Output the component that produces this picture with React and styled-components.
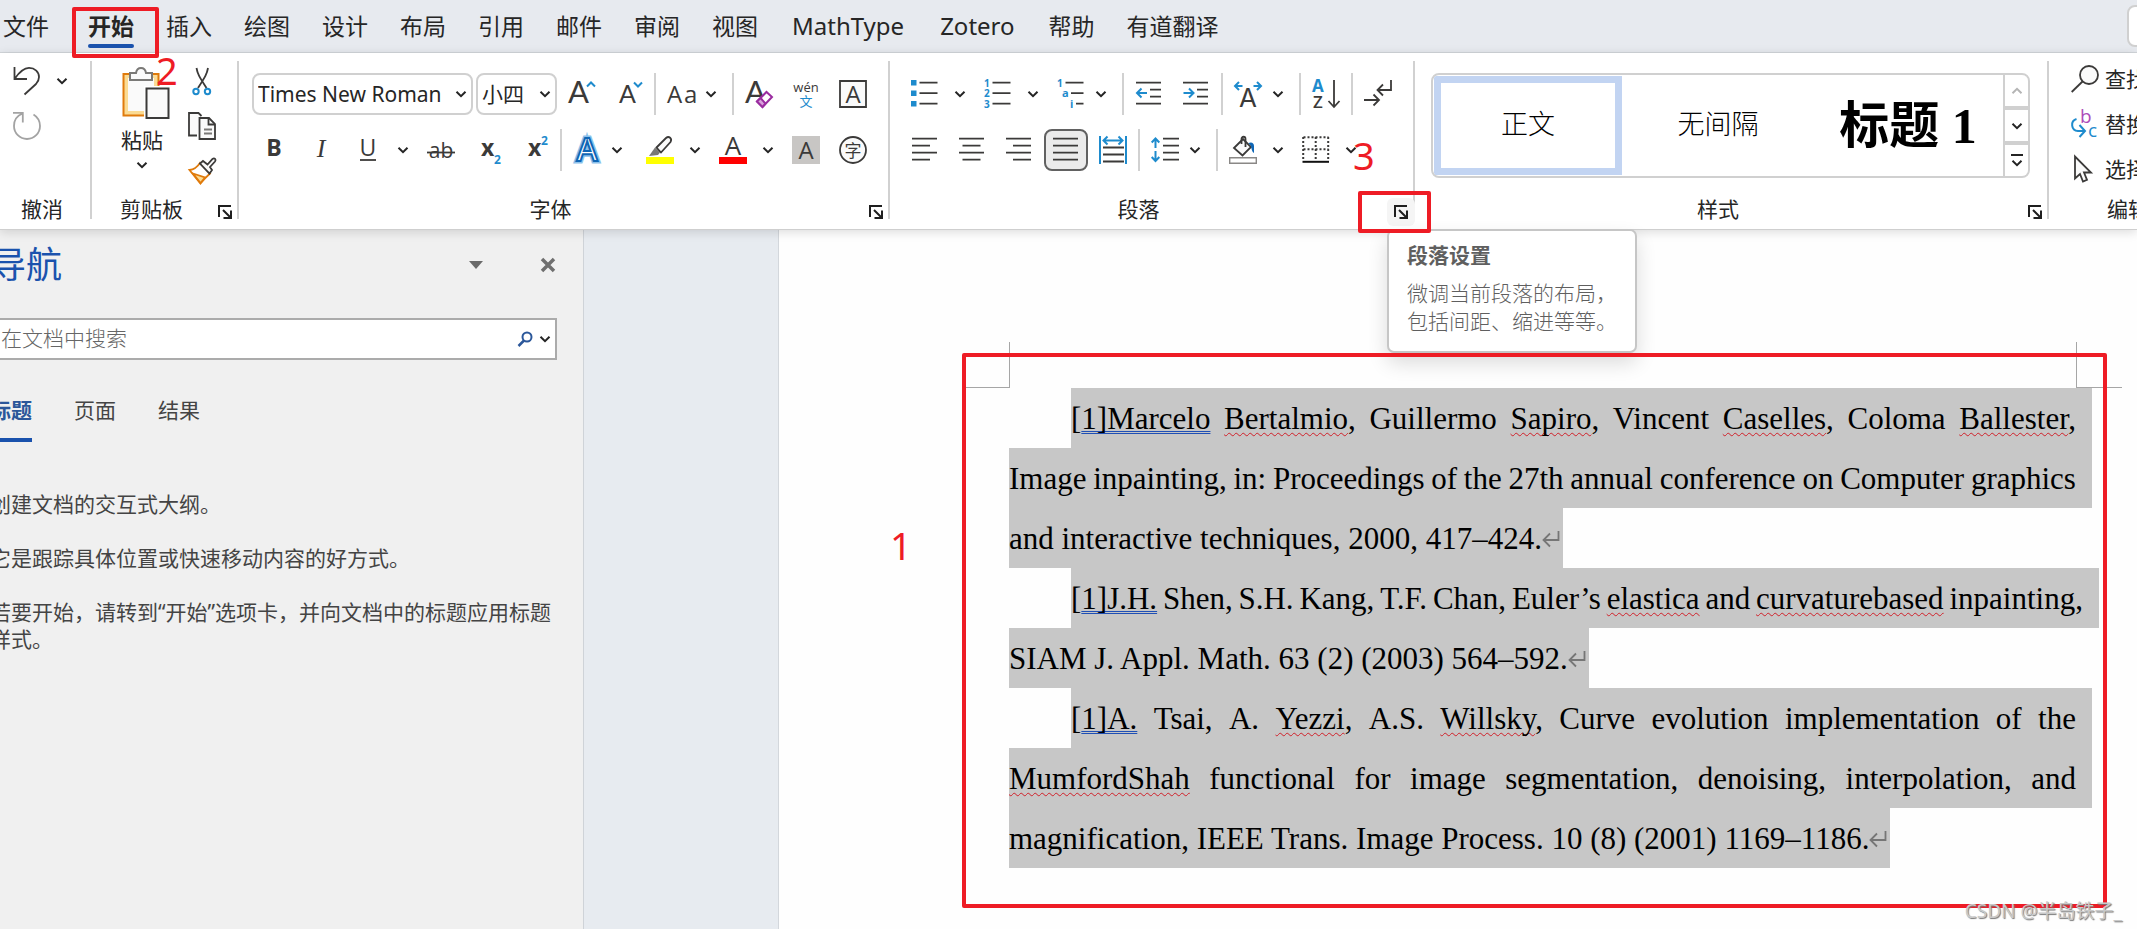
import React from "react";
import styled, { createGlobalStyle } from "styled-components";

const INK = "#3b3a39";
const BLUE = "#1e8bcd";
const ACCENT = "#1a52ad";
const RED = "#ee1c25";

const TABS = [
  "文件",
  "开始",
  "插入",
  "绘图",
  "设计",
  "布局",
  "引用",
  "邮件",
  "审阅",
  "视图",
  "MathType",
  "Zotero",
  "帮助",
  "有道翻译",
];

/* Icons */

function Icon({ children, size = 28 }) {
  return (
    <svg
      width={size}
      height={size}
      viewBox={`0 0 ${size} ${size}`}
      fill="none"
      stroke={INK}
      strokeWidth="1.8"
      aria-hidden="true"
    >
      {children}
    </svg>
  );
}

function Glyph({ x, y, size, color = INK, weight = 400, anchor, family, children, ...rest }) {
  return (
    <text
      x={x}
      y={y}
      fontSize={size}
      fontWeight={weight}
      textAnchor={anchor}
      fontFamily={family || '"Open Sans", "Noto Sans CJK SC", sans-serif'}
      fill={color}
      stroke="none"
      {...rest}
    >
      {children}
    </text>
  );
}

function Chevron({ color = "#242424", up }) {
  return (
    <svg width="12" height="8" viewBox="0 0 12 8" fill="none" stroke={color} strokeWidth="2" aria-hidden="true">
      <path d={up ? "M1.5 6.2 6 1.8l4.5 4.4" : "M1.5 1.8 6 6.2l4.5-4.4"} />
    </svg>
  );
}

const UndoIcon = () => (
  <Icon>
    <path d="M1.500 0v12h12.500M1.500 12C7 4 11 .9 16 .9c6 0 10 4 10 9.100 0 3-1.200 5-3 7L11.500 27.500" />
  </Icon>
);

const RedoIcon = () => (
  <Icon>
    <path stroke="#a3a3a3" d="M0 .9h9.800v9.600M9.500 1.500C4.500 3.500 1 8 1 14a13 13 0 0 0 26 0c0-5-2.500-9-6.500-11.500" />
  </Icon>
);

const PasteIcon = () => (
  <svg width="48" height="52" viewBox="0 0 48 52" fill="none" aria-hidden="true">
    <path d="M1.500 7h35v41.500h-35z" fill="#fbdb93" stroke="#e07b0c" strokeWidth="2" />
    <path d="M6 11h26v33H6z" fill="#fafafa" />
    <path d="M8 13V6h6c.5-3 2.500-5 5-5s4.500 2 5 5h6v7z" fill="#fafafa" stroke="#7a7977" strokeWidth="2" />
    <path d="M22 19h26v33H22z" fill="#fff" />
    <path d="M24.500 21.500h22V51h-22z" fill="#fafafa" stroke="#3b3a39" strokeWidth="2" />
  </svg>
);

const CutIcon = () => (
  <Icon>
    <path d="M8.500 1c1 6 3 9 10 20M20 1c-1 6-3 9-10 20" />
    <circle cx="8" cy="24.500" r="2.700" stroke={BLUE} strokeWidth="2" />
    <circle cx="19.500" cy="24.500" r="2.700" stroke={BLUE} strokeWidth="2" />
  </Icon>
);

const CopyIcon = () => (
  <Icon>
    <path d="M9 23.500H1V1h9.500l3 3" fill="#fafafa" />
    <path d="M11.500 6h9.500l6 6v15H11.500z" fill="#fafafa" />
    <path d="M20.500 6v6.500H27" />
    <path d="M16 17.500h8M16 21.500h8" stroke="#7a7977" />
  </Icon>
);

const PainterIcon = () => (
  <Icon>
    <path d="M1.500 13C6 12.500 10 9 12 6l10 10.500c-4 3.500-7 7-9.500 10z" fill="#fff" stroke="#e07b0c" />
    <path d="M5 16.500l12 4-4.500 5.500z" fill="#fbdb93" stroke="#e07b0c" />
    <path d="M12 6.500l3-2.500 4.500 3.500L24.500 2c2-1.500 4 .5 2.500 2.500l-5 5.500 2 3-2.500 3.500z" fill="#fafafa" />
  </Icon>
);

const GrowIcon = () => (
  <Icon>
    <Glyph x="0" y="23" size="31" family="Lato, sans-serif">A</Glyph>
    <path d="M19 6.500l4-4 4 4" stroke={BLUE} strokeWidth="2" />
  </Icon>
);

const ShrinkIcon = () => (
  <Icon>
    <Glyph x="4" y="23" size="25" family="Lato, sans-serif">A</Glyph>
    <path d="M19 2.500l4 4 4-4" stroke={BLUE} strokeWidth="2" />
  </Icon>
);

const CaseIcon = () => (
  <Icon>
    <Glyph x="0" y="23" size="24">A</Glyph>
    <Glyph x="17" y="23" size="24">a</Glyph>
  </Icon>
);

const ClearIcon = () => (
  <Icon>
    <Glyph x="0" y="23" size="31" family="Lato, sans-serif">A</Glyph>
    <path d="M12 21.500L21.500 12l5.500 5L17.500 27z" fill="#fff" stroke="#9a2ca0" strokeWidth="2" />
    <path d="M12 21.500l3.500-3.500 5 5.500-3 3.500z" fill="#d9a0dc" stroke="#9a2ca0" strokeWidth="2" />
  </Icon>
);

const PhoneticIcon = () => (
  <Icon>
    <Glyph x="14" y="12" size="13" anchor="middle">wén</Glyph>
    <Glyph x="14" y="26" size="13" anchor="middle" color={BLUE}>文</Glyph>
  </Icon>
);

const CharBorderIcon = () => (
  <Icon>
    <path d="M1 1h26v26H1z" fill="#fafafa" />
    <Glyph x="14" y="22.500" size="24" anchor="middle">A</Glyph>
  </Icon>
);

const BoldIcon = () => (
  <Icon>
    <Glyph x="14" y="20" size="23" weight="700" anchor="middle">B</Glyph>
  </Icon>
);

const ItalicIcon = () => (
  <Icon>
    <Glyph x="14" y="20.500" size="26" anchor="middle" family='"Liberation Serif", serif' fontStyle="italic">I</Glyph>
  </Icon>
);

const UnderlineIcon = () => (
  <Icon>
    <Glyph x="14" y="20" size="23" anchor="middle">U</Glyph>
    <path d="M6 24h16" />
  </Icon>
);

const StrikeIcon = () => (
  <Icon>
    <Glyph x="14" y="22" size="21" anchor="middle">ab</Glyph>
    <path d="M0 16.500h28" />
  </Icon>
);

const SubIcon = () => (
  <Icon>
    <Glyph x="7" y="20" size="23" weight="700">x</Glyph>
    <Glyph x="20" y="27.500" size="12" weight="700" color={BLUE}>2</Glyph>
  </Icon>
);

const SuperIcon = () => (
  <Icon>
    <Glyph x="7" y="20" size="23" weight="700">x</Glyph>
    <Glyph x="20" y="9" size="12" weight="700" color={BLUE}>2</Glyph>
  </Icon>
);

const EffectsIcon = () => (
  <Icon>
    <Glyph x="14" y="25" size="32" weight="600" anchor="middle" color="#fff" style={{ stroke: "#8cc1ea", strokeWidth: 5 }}>A</Glyph>
    <Glyph x="14" y="25" size="32" weight="600" anchor="middle" color="#fff" style={{ stroke: "#0f66b5", strokeWidth: 2 }}>A</Glyph>
  </Icon>
);

const HighlightIcon = () => (
  <Icon>
    <path d="M3 20l6-8.500 5 5L12 19z" fill="#7a7977" stroke="none" />
    <path d="M10.500 11.500L20 2c3-2.500 6.500.5 4.500 4L15 16.500z" fill="#fafafa" />
    <path d="M0 21h28v7H0z" fill="#ff0" stroke="none" />
  </Icon>
);

const FontColorIcon = () => (
  <Icon>
    <Glyph x="14" y="19" size="26" anchor="middle">A</Glyph>
    <path d="M0 21h28v7H0z" fill="#f00" stroke="none" />
  </Icon>
);

const CharShadeIcon = () => (
  <Icon>
    <path d="M0 0h28v28H0z" fill="#c8c6c4" stroke="none" />
    <Glyph x="14" y="22.500" size="24" anchor="middle">A</Glyph>
  </Icon>
);

const EncloseIcon = () => (
  <Icon>
    <circle cx="14" cy="14" r="13" fill="#fafafa" />
    <Glyph x="14" y="20.500" size="17" anchor="middle">字</Glyph>
  </Icon>
);

const BulletsIcon = () => (
  <Icon>
    <path d="M0 0h5.500v5.500H0zM0 10.500h5.500V16H0zM0 21h5.500v5.500H0z" fill={BLUE} stroke="none" />
    <path d="M8.500 2.700h18M8.500 13.200h18M8.500 23.700h18" />
  </Icon>
);

const NumberingIcon = () => (
  <Icon>
    <Glyph x="0" y="6.500" size="10" weight="700" color={BLUE}>1</Glyph>
    <Glyph x="0" y="17" size="10" weight="700" color={BLUE}>2</Glyph>
    <Glyph x="0" y="27.500" size="10" weight="700" color={BLUE}>3</Glyph>
    <path d="M8.500 2.700h18M8.500 13.200h18M8.500 23.700h18" />
  </Icon>
);

const MultilevelIcon = () => (
  <Icon>
    <Glyph x="0" y="6.500" size="10" weight="700" color={BLUE}>1</Glyph>
    <Glyph x="5" y="17" size="11" weight="700" color={BLUE}>a</Glyph>
    <Glyph x="13" y="27.500" size="11" weight="700" color={BLUE}>i</Glyph>
    <path d="M8.500 2.700h18M14 13.200h12.500M19 23.700h7.500" />
  </Icon>
);

function IndentIcon({ out }) {
  return (
    <Icon>
      <path d="M1 2.700h25M15 9.700h11M15 16.700h11M1 23.700h25" />
      <path
        d={out ? "M12 13H2.500M6.500 8.500L2 13l4.500 4.500" : "M1.500 13H11M7 8.500l4.500 4.500L7 17.500"}
        stroke={BLUE}
        strokeWidth="2"
      />
    </Icon>
  );
}

const AlignIcon = ({ d }) => (
  <Icon>
    <path d={d} />
  </Icon>
);

const DistributeIcon = () => (
  <Icon>
    <path d="M4 11.500h21M4 18.500h21M4 25.500h21" />
    <path d="M1 0v28M27 0v28M5 4.500h18M8.500.5l-4 4 4 4M19.500.5l4 4-4 4" stroke={BLUE} strokeWidth="2" />
  </Icon>
);

const SpacingIcon = () => (
  <Icon>
    <path d="M12 2.700h16M12 9.700h16M12 16.700h16M12 23.700h16" />
    <path d="M4.500 2.500V12M.7 6.500l3.800-4 3.800 4M4.500 15v9.500M.7 21l3.800 4 3.800-4" stroke={BLUE} strokeWidth="2" />
  </Icon>
);

const AsianIcon = () => (
  <Icon>
    <Glyph x="14" y="27" size="26" anchor="middle" family="Inter, sans-serif">A</Glyph>
    <path d="M8.500 6H1.500M5 2L1 6l4 4M19.500 6h7M23 2l4 4-4 4" stroke={BLUE} strokeWidth="2" />
  </Icon>
);

const SortIcon = () => (
  <Icon>
    <Glyph x="0" y="12" size="17" weight="700" color={BLUE}>A</Glyph>
    <Glyph x="1" y="28" size="17" weight="600">Z</Glyph>
    <path d="M22 0v26.500M16.500 21l5.500 6 5.500-6" />
  </Icon>
);

const MarksIcon = () => (
  <Icon>
    <path d="M27 0v10H14M19 4.500L13.500 10l5.500 5.500M0 20h14.500M9.500 14.500L15 20l-5.500 5.500" />
  </Icon>
);

const ShadingIcon = () => (
  <Icon>
    <path d="M5 12l9-9 8 8-8.500 8.500z" fill="#fafafa" />
    <path d="M12.500 8V3c0-3 4-3 4 0v8" />
    <path d="M19.500 7c3-1.500 5.500 0 5.500 3v7c-2-1-2.500-4-3-7z" fill="#0f66b5" stroke="none" />
    <path d="M.7 21.700h26.600v5.600H.7z" fill="#fff" stroke="#8a8886" strokeWidth="1.400" />
  </Icon>
);

const BordersIcon = () => (
  <Icon>
    <path d="M1.500 1.200h25M1.500 13.200h25M1.200 1v23M13.700 1v23M26.200 1v23" strokeWidth="2" strokeDasharray="2 2" />
    <path d="M.5 25.800h26.500" stroke="#111" strokeWidth="2" />
  </Icon>
);

const FindIcon = () => (
  <Icon>
    <circle cx="18" cy="10" r="9" fill="#fafafa" />
    <path d="M11.500 16.500L.7 27" />
  </Icon>
);

const ReplaceIcon = () => (
  <Icon>
    <Glyph x="9" y="13" size="19" color="#ad4bb8">b</Glyph>
    <Glyph x="17" y="27" size="19" color={BLUE}>c</Glyph>
    <path d="M5.500 9C-1 11 0 20.500 7 21h6M8.500 15l5.500 6-5.500 6" stroke={BLUE} strokeWidth="2" />
  </Icon>
);

const SelectIcon = () => (
  <Icon>
    <path d="M4 1.500v22l5-4.500 3 7.500 4-1.700-3-7.300h7z" fill="#fafafa" />
  </Icon>
);

const LauncherIcon = () => (
  <svg width="16" height="16" viewBox="0 0 16 16" fill="none" stroke="#1f1f1f" strokeWidth="2" aria-hidden="true">
    <path d="M2 13V2h12M6 6l7.500 7.500M14 6.500V14H6.500" />
  </svg>
);

const ReturnMark = () => (
  <MarkSvg width="18" height="18" viewBox="0 0 18 18" fill="none" stroke="#767676" strokeWidth="1.800" aria-hidden="true">
    <path d="M16.500 1v9H2M8 3.500L1.500 10 8 16.500" />
  </MarkSvg>
);

/* Ribbon pieces */

function Tool({ icon, label, pressed }) {
  return (
    <ToolButton type="button" aria-label={label} aria-pressed={pressed ? true : undefined} $pressed={pressed}>
      {icon}
    </ToolButton>
  );
}

// icon with its own drop-down arrow
function SplitTool({ icon, label }) {
  return (
    <SplitWrap>
      <ToolButton type="button" aria-label={label}>
        {icon}
      </ToolButton>
      <ArrowButton type="button" aria-label={`${label}选项`}>
        <Chevron />
      </ArrowButton>
    </SplitWrap>
  );
}

function MenuTool({ icon, label }) {
  return (
    <MenuButton type="button" aria-label={label}>
      {icon}
      <Chevron />
    </MenuButton>
  );
}

function GroupFooter({ label, launcher, children }) {
  return (
    <Footer>
      <FooterLabel>{label}</FooterLabel>
      {launcher && (
        <LauncherWrap>
          <Launcher type="button" aria-label={launcher} $hover={Boolean(children)}>
            <LauncherIcon />
          </Launcher>
          {children}
        </LauncherWrap>
      )}
    </Footer>
  );
}

/* Document text: "_word_" is a spelling mark, "=word=" is a grammar mark */

function Word({ text }) {
  const parts = text.split(/(_[^_]+_|=[^=]+=)/).filter(Boolean);
  return (
    <span>
      {parts.map((part, i) => {
        if (part[0] === "_") return <Spelling key={i}>{part.slice(1, -1)}</Spelling>;
        if (part[0] === "=") return <Grammar key={i}>{part.slice(1, -1)}</Grammar>;
        return part;
      })}{" "}
    </span>
  );
}

const LINES = [
  { text: "[=1]Marcelo= _Bertalmio_, Guillermo _Sapiro_, Vincent _Caselles_, Coloma _Ballester_,", indent: true },
  { text: "Image inpainting, in: Proceedings of the 27th annual conference on Computer graphics" },
  { text: "and interactive techniques, 2000, 417–424.", last: true },
  { text: "[=1]J.H.= Shen, S.H. Kang, T.F. Chan, Euler’s _elastica_ and _curvaturebased_ inpainting,", indent: true, hang: true },
  { text: "SIAM J. Appl. Math. 63 (2) (2003) 564–592.", last: true },
  { text: "[=1]A.= Tsai, A. _Yezzi_, A.S. _Willsky_, Curve evolution implementation of the", indent: true },
  { text: "_MumfordShah_ functional for image segmentation, denoising, interpolation, and" },
  { text: "magnification, IEEE Trans. Image Process. 10 (8) (2001) 1169–1186.", last: true },
];

function Line({ line }) {
  if (line.last) {
    return (
      <LastLine>
        {line.text}
        <ReturnMark />
      </LastLine>
    );
  }
  return (
    <FullLine $indent={line.indent} $hang={line.hang}>
      {line.text.split(" ").map((word, i) => (
        <Word key={i} text={word} />
      ))}
    </FullLine>
  );
}

export default function App() {
  return (
    <Window>
      <GlobalStyle />
      <TabBar>
        {TABS.map((tab) => (
          <Tab key={tab} type="button" $active={tab === "开始"} $latin={/^[A-Z]/.test(tab)}>
            {tab}
            {tab === "开始" && (
              <>
                <TabFrame />
                <TabStep>2</TabStep>
              </>
            )}
          </Tab>
        ))}
        <CommentButton type="button" aria-label="批注" />
      </TabBar>

      <Ribbon>
        <Group $width={90} $end={6}>
          <Stack $left={5}>
            <StackRow>
              <Tool icon={<UndoIcon />} label="撤消" />
              <ArrowButton type="button" aria-label="撤消选项">
                <Chevron />
              </ArrowButton>
            </StackRow>
            <StackRow>
              <Tool icon={<RedoIcon />} label="重复" />
            </StackRow>
          </Stack>
          <GroupFooter label="撤消" />
        </Group>
        <Divider />

        <Group $width={145}>
          <Clipboard>
            <PasteButton type="button">
              <PasteIcon />
              粘贴
              <Chevron />
            </PasteButton>
            <Stack $left={5}>
              <StackRow>
                <Tool icon={<CutIcon />} label="剪切" />
              </StackRow>
              <StackRow>
                <Tool icon={<CopyIcon />} label="复制" />
              </StackRow>
              <StackRow>
                <Tool icon={<PainterIcon />} label="格式刷" />
              </StackRow>
            </Stack>
          </Clipboard>
          <GroupFooter label="剪贴板" launcher="剪贴板设置" />
        </Group>
        <Divider />

        <Group $width={649}>
          <Tools>
            <ToolRow>
              <Combo $width={221}>
                <select aria-label="字体" defaultValue="Times New Roman">
                  <option>Times New Roman</option>
                </select>
                <Chevron />
              </Combo>
              <Combo $width={81}>
                <select aria-label="字号" defaultValue="小四">
                  <option>小四</option>
                </select>
                <Chevron />
              </Combo>
              <Tool icon={<GrowIcon />} label="增大字号" />
              <Tool icon={<ShrinkIcon />} label="减小字号" />
              <Separator />
              <MenuTool icon={<CaseIcon />} label="更改大小写" />
              <Separator />
              <Tool icon={<ClearIcon />} label="清除格式" />
              <Tool icon={<PhoneticIcon />} label="拼音指南" />
              <Tool icon={<CharBorderIcon />} label="字符边框" />
            </ToolRow>
            <ToolRow>
              <Tool icon={<BoldIcon />} label="加粗" />
              <Tool icon={<ItalicIcon />} label="倾斜" />
              <SplitTool icon={<UnderlineIcon />} label="下划线" />
              <Tool icon={<StrikeIcon />} label="删除线" />
              <Tool icon={<SubIcon />} label="下标" />
              <Tool icon={<SuperIcon />} label="上标" />
              <Separator />
              <MenuTool icon={<EffectsIcon />} label="文本效果" />
              <SplitTool icon={<HighlightIcon />} label="突出显示" />
              <SplitTool icon={<FontColorIcon />} label="字体颜色" />
              <Tool icon={<CharShadeIcon />} label="字符底纹" />
              <Tool icon={<EncloseIcon />} label="带圈字符" />
            </ToolRow>
          </Tools>
          <GroupFooter label="字体" launcher="字体设置" />
        </Group>
        <Divider />

        <Group $width={523}>
          <Tools>
            <ToolRow>
              <SplitTool icon={<BulletsIcon />} label="项目符号" />
              <SplitTool icon={<NumberingIcon />} label="编号" />
              <MenuTool icon={<MultilevelIcon />} label="多级列表" />
              <Separator />
              <Tool icon={<IndentIcon out />} label="减少缩进" />
              <Tool icon={<IndentIcon />} label="增加缩进" />
              <Separator />
              <MenuTool icon={<AsianIcon />} label="中文版式" />
              <Separator />
              <Tool icon={<SortIcon />} label="排序" />
              <Separator />
              <Tool icon={<MarksIcon />} label="显示编辑标记" />
            </ToolRow>
            <ToolRow>
              <Tool icon={<AlignIcon d="M1 2.700h25M1 9.700h18M1 16.700h25M1 23.700h18" />} label="左对齐" />
              <Tool icon={<AlignIcon d="M1 2.700h25M4.500 9.700h18M1 16.700h25M4.500 23.700h18" />} label="居中" />
              <Tool icon={<AlignIcon d="M1 2.700h25M8 9.700h18M1 16.700h25M8 23.700h18" />} label="右对齐" />
              <Tool icon={<AlignIcon d="M1 2.700h25M1 9.700h25M1 16.700h25M1 23.700h25" />} label="两端对齐" pressed />
              <Tool icon={<DistributeIcon />} label="分散对齐" />
              <Separator />
              <MenuTool icon={<SpacingIcon />} label="行和段落间距" />
              <Separator />
              <SplitTool icon={<ShadingIcon />} label="底纹" />
              <SplitTool icon={<BordersIcon />} label="边框" />
            </ToolRow>
          </Tools>
          <GroupFooter label="段落" launcher="段落设置">
            <Tooltip role="tooltip">
              <strong>段落设置</strong>
              <p>
                微调当前段落的布局，
                <br />
                包括间距、缩进等等。
              </p>
            </Tooltip>
            <LauncherFrame />
            <LauncherStep>3</LauncherStep>
          </GroupFooter>
        </Group>
        <Divider />

        <Group $grow>
          <Gallery>
            <StyleCell type="button" $selected>
              正文
            </StyleCell>
            <StyleCell type="button">无间隔</StyleCell>
            <StyleCell type="button" $heading>
              标题 1
            </StyleCell>
            <GalleryScroll>
              <ScrollButton type="button" aria-label="上一行">
                <Chevron up color="#b5b5b5" />
              </ScrollButton>
              <ScrollButton type="button" aria-label="下一行">
                <Chevron />
              </ScrollButton>
              <ScrollButton type="button" aria-label="更多样式" $bar>
                <Chevron />
              </ScrollButton>
            </GalleryScroll>
          </Gallery>
          <GroupFooter label="样式" launcher="样式设置" />
        </Group>
        <Divider />

        <Group $width={88}>
          <EditStack>
            <EditButton type="button">
              <FindIcon />
              查找
            </EditButton>
            <EditButton type="button">
              <ReplaceIcon />
              替换
            </EditButton>
            <EditButton type="button">
              <SelectIcon />
              选择
            </EditButton>
          </EditStack>
          <EditLabel>编辑</EditLabel>
        </Group>
      </Ribbon>

      <Workspace>
        <NavPane>
          <NavHeader>
            <h2>导航</h2>
            <NavButton type="button" aria-label="任务窗格选项">
              <svg width="14" height="8" viewBox="0 0 14 8" aria-hidden="true">
                <path d="M0 0h14L7 8z" fill="#6a6a6a" />
              </svg>
            </NavButton>
            <NavButton type="button" aria-label="关闭">
              <svg width="16" height="16" viewBox="0 0 16 16" aria-hidden="true">
                <path d="M2 2l12 12M14 2L2 14" stroke="#6f6f6f" strokeWidth="3.500" />
              </svg>
            </NavButton>
          </NavHeader>
          <SearchBox>
            <input type="text" aria-label="在文档中搜索" placeholder="在文档中搜索" />
            <SearchButton type="button" aria-label="搜索">
              <svg width="16" height="16" viewBox="0 0 16 16" fill="none" stroke="#2b579a" aria-hidden="true">
                <circle cx="10" cy="6" r="4.500" strokeWidth="2" />
                <path d="M7 9.500L1.500 15" strokeWidth="2.500" />
              </svg>
            </SearchButton>
            <SearchButton type="button" aria-label="搜索选项">
              <Chevron />
            </SearchButton>
          </SearchBox>
          <NavTabs>
            <NavTab type="button" $active>
              标题
            </NavTab>
            <NavTab type="button">页面</NavTab>
            <NavTab type="button">结果</NavTab>
          </NavTabs>
          <NavText>
            <p>创建文档的交互式大纲。</p>
            <p>它是跟踪具体位置或快速移动内容的好方式。</p>
            <p>若要开始，请转到“开始”选项卡，并向文档中的标题应用标题样式。</p>
          </NavText>
        </NavPane>

        <Page>
          <Article>
            <CropMarks>
              <CropCorner $side="right" />
              <CropCorner $side="left" />
            </CropMarks>
            {LINES.map((line, i) => (
              <Line key={i} line={line} />
            ))}
            <ArticleFrame />
            <ArticleStep>1</ArticleStep>
          </Article>
        </Page>
      </Workspace>
      <Watermark>CSDN @半岛铁子_</Watermark>
    </Window>
  );
}

const GlobalStyle = createGlobalStyle`
  *, *::before, *::after {
    box-sizing: border-box;
  }

  body {
    margin: 0;
    overflow: hidden;
    font-family: "Noto Sans", "Noto Sans CJK SC", sans-serif;
    color: #262626;
  }

  button, input, select {
    font: inherit;
    color: inherit;
    margin: 0;
    padding: 0;
    border: 0;
    background: none;
  }

  svg {
    flex: none;
    overflow: visible;
  }

  h2, p {
    margin: 0;
  }
`;

const Window = styled.div`
  position: relative;
  display: flex;
  flex-direction: column;
  height: 100vh;
  overflow: hidden;
  background: #e7ebf0;
`;

const TabBar = styled.nav`
  display: flex;
  gap: 32px;
  flex: none;
  height: 53px;
  padding-left: 3px;
  background: #e7eaef;
  border-bottom: 1px solid #d2d6da;
`;

const Tab = styled.button`
  position: relative;
  z-index: 3;
  flex: none;
  height: 52px;
  padding: 0 ${(p) => (p.$latin ? 2 : 0)}px;
  font-size: ${(p) => (p.$latin ? 24 : 23)}px;
  line-height: 52px;
  white-space: nowrap;
  font-weight: ${(p) => (p.$active ? 700 : 400)};

  &:first-child {
    margin-right: 7px;
  }

  &::after {
    content: "";
    display: ${(p) => (p.$active ? "block" : "none")};
    position: absolute;
    left: 0;
    right: 0;
    bottom: 4px;
    height: 4px;
    border-radius: 2px;
    background: ${ACCENT};
  }
`;

const CommentButton = styled.button`
  flex: none;
  width: 42px;
  height: 42px;
  margin: 5px -32px 0 auto;
  background: #fff;
  border: 2px solid #d0d0d0;
  border-radius: 8px;
`;

/* Red marks drawn over the window */
const Frame = styled.span`
  position: absolute;
  z-index: 4;
  border: 4px solid ${RED};
  border-radius: 2px;
  pointer-events: none;
`;

const Step = styled.span`
  position: absolute;
  z-index: 4;
  font-size: 38px;
  font-weight: 400;
  line-height: 40px;
  color: ${RED};
`;

const TabFrame = styled(Frame)`
  top: 7px;
  left: -16px;
  width: 87px;
  height: 51px;
`;

const TabStep = styled(Step)`
  top: 50px;
  left: 68px;
`;

const LauncherFrame = styled(Frame)`
  top: -7px;
  left: -29px;
  width: 73px;
  height: 42px;
`;

const LauncherStep = styled(Step)`
  top: -63px;
  left: -34px;
`;

const Ribbon = styled.header`
  position: relative;
  z-index: 2;
  display: flex;
  flex: none;
  height: 177px;
  background: #fff;
  border-bottom: 1px solid #cfcfcf;
  box-shadow: 0 2px 10px rgba(0, 0, 0, 0.14);
  font-size: 21px;
`;

const Group = styled.section`
  display: flex;
  flex-direction: column;
  flex: ${(p) => (p.$grow ? "1 1 0" : "none")};
  width: ${(p) => (p.$width ? `${p.$width}px` : "auto")};
  min-width: 0;
  padding-right: ${(p) => p.$end || 0}px;
`;

const Divider = styled.div`
  flex: none;
  width: 2px;
  height: 158px;
  margin-top: 8px;
  background: #d1d1d1;
`;

const Footer = styled.div`
  display: flex;
  height: 28px;
  margin-top: auto;
  margin-bottom: 3px;
`;

const FooterLabel = styled.span`
  flex: 1;
  line-height: 23px;
  text-align: center;
`;

const LauncherWrap = styled.div`
  position: relative;
  margin-right: -2px;
`;

const Launcher = styled.button`
  display: flex;
  align-items: center;
  justify-content: center;
  position: relative;
  width: 28px;
  height: 28px;
  border-radius: 6px;
  background: ${(p) => (p.$hover ? "#f5f5f5" : "none")};
`;

const Tools = styled.div`
  display: flex;
  flex-direction: column;
  gap: 14px;
  padding: 20px 0 0 13px;
`;

const ToolRow = styled.div`
  display: flex;
  gap: 3px;
  height: 42px;
`;

const Separator = styled.span`
  flex: none;
  width: 2px;
  background: #d1d1d1;
`;

const ToolButton = styled.button`
  display: flex;
  align-items: center;
  justify-content: center;
  flex: none;
  width: 44px;
  height: 42px;
  border: 2px solid ${(p) => (p.$pressed ? "#616161" : "transparent")};
  border-radius: 8px;
  background: ${(p) => (p.$pressed ? "#ebebeb" : "none")};
`;

const ArrowButton = styled.button`
  display: flex;
  align-items: center;
  justify-content: center;
  flex: none;
  width: 26px;
`;

const SplitWrap = styled.div`
  display: flex;
`;

const MenuButton = styled.button`
  display: flex;
  align-items: center;
  gap: 10px;
  flex: none;
  width: 70px;
  padding-left: 8px;
`;

const Combo = styled.div`
  display: flex;
  align-items: center;
  flex: none;
  width: ${(p) => p.$width}px;
  border: 2px solid #d0d0d0;
  border-radius: 8px;
  padding-right: 4px;

  select {
    flex: 1;
    min-width: 0;
    height: 38px;
    padding-left: 4px;
    appearance: none;
    outline: none;
  }
`;

const Stack = styled.div`
  display: flex;
  flex-direction: column;
  padding: 5px 0 0 ${(p) => p.$left}px;
`;

const StackRow = styled.div`
  display: flex;
  align-items: center;
  height: 45px;
`;

const Clipboard = styled.div`
  display: flex;
  padding-left: 17px;
`;

const PasteButton = styled.button`
  display: flex;
  flex-direction: column;
  align-items: center;
  width: 66px;
  padding-top: 14px;
  line-height: 42px;

  svg:first-child {
    margin-left: 8px;
  }
`;

const EditStack = styled.div`
  display: flex;
  flex-direction: column;
  padding: 3px 0 0 22px;
`;

const EditButton = styled.button`
  display: flex;
  align-items: center;
  gap: 6px;
  height: 45px;
  line-height: 26px;
  white-space: nowrap;
`;

const EditLabel = styled.span`
  margin: auto 0 3px 58px;
  height: 28px;
  line-height: 23px;
  white-space: nowrap;
`;

const Gallery = styled.div`
  display: flex;
  height: 105px;
  margin: 20px 17px 0 16px;
  border: 2px solid #d0d0d0;
  border-radius: 8px;
  overflow: hidden;
`;

const StyleCell = styled.button`
  flex: 1;
  margin: 1px;
  border: 7px solid ${(p) => (p.$selected ? "#c2d4f2" : "transparent")};
  color: #000;
  font-family: "Liberation Serif", "Noto Sans CJK SC", serif;
  font-size: ${(p) => (p.$heading ? 50 : 27)}px;
  font-weight: ${(p) => (p.$heading ? 700 : 300)};
  line-height: 1;
  white-space: nowrap;
`;

const GalleryScroll = styled.div`
  display: flex;
  flex-direction: column;
  gap: 4px;
  flex: none;
  width: 25px;
  border-left: 2px solid #d0d0d0;
  background: #d0d0d0;
`;

const ScrollButton = styled.button`
  display: flex;
  flex-direction: column;
  align-items: center;
  justify-content: center;
  flex: 1;
  background: #fff;

  &::before {
    content: "";
    display: ${(p) => (p.$bar ? "block" : "none")};
    width: 12px;
    height: 2px;
    margin-bottom: 3px;
    background: #242424;
  }
`;

const Tooltip = styled.div`
  position: absolute;
  top: 31px;
  left: 0;
  width: 250px;
  padding: 10px 18px 16px;
  background: #fff;
  border: 2px solid #c6c6c6;
  border-radius: 7px;
  box-shadow: 0 10px 20px rgba(0, 0, 0, 0.14);
  color: #5f5f5f;
  line-height: 28px;
  white-space: nowrap;

  p {
    margin-top: 10px;
    font-weight: 300;
  }
`;

const Workspace = styled.main`
  display: flex;
  flex: 1;
  min-height: 0;
`;

const NavPane = styled.aside`
  flex: none;
  width: 594px;
  margin-left: -10px;
  padding-right: 26px;
  background: #f0f0f0;
  border-right: 1px solid #cfd3d8;
`;

const NavHeader = styled.div`
  display: flex;
  align-items: center;
  gap: 44px;
  margin-right: -5px;
  padding: 10px 0 28px;

  h2 {
    flex: 1;
    font-size: 36px;
    font-weight: 400;
    line-height: 50px;
    color: ${ACCENT};
  }
`;

const NavButton = styled.button`
  display: flex;
  align-items: center;
  justify-content: center;
  width: 28px;
  height: 28px;
`;

const SearchBox = styled.div`
  display: flex;
  align-items: center;
  height: 42px;
  padding: 0 0 0 9px;
  background: #fff;
  border: 2px solid #ababab;

  input {
    flex: 1;
    min-width: 0;
    height: 36px;
    margin-bottom: 2px;
    font-size: 21px;
    font-weight: 300;
    outline: none;
  }

  input::placeholder {
    color: #666;
    opacity: 1;
  }
`;

const SearchButton = styled.button`
  display: flex;
  align-items: center;
  justify-content: center;
  width: 20px;
  height: 38px;
`;

const NavTabs = styled.div`
  display: flex;
  gap: 42px;
  padding-top: 32px;
`;

const NavTab = styled.button`
  height: 50px;
  padding-bottom: 10px;
  font-size: 21px;
  line-height: 36px;
  color: ${(p) => (p.$active ? "#2b579a" : "#444")};
  font-weight: ${(p) => (p.$active ? 700 : 400)};
  border-bottom: 4px solid ${(p) => (p.$active ? ACCENT : "transparent")};
`;

const NavText = styled.div`
  display: flex;
  flex-direction: column;
  gap: 27px;
  padding-top: 49px;
  font-size: 21px;
  line-height: 27px;
  color: #444;
`;

const Page = styled.div`
  flex: 1;
  min-width: 0;
  margin-left: 194px;
  padding: 112px 61px 0 230px;
  background: #fefefe;
  border-left: 1px solid #d3d7dc;
`;

const Article = styled.article`
  position: relative;
  color: #000;
  font-family: "Liberation Serif", serif;
  font-size: 31px;
  line-height: 62px;
`;

const CropMarks = styled.div`
  display: flex;
  justify-content: space-between;
  margin: 0 -46px 0 -45px;
`;

const CropCorner = styled.span`
  width: 46px;
  height: 46px;
  border-bottom: 1px solid #a6a6a6;
  border-${(p) => p.$side}: 1px solid #a6a6a6;
`;

const LastLine = styled.div`
  width: fit-content;
  height: 60px;
  padding-right: 3px;
  background: #c7c7c7;
  white-space: nowrap;
`;

const FullLine = styled.div`
  display: flex;
  justify-content: space-between;
  height: 60px;
  margin-left: ${(p) => (p.$indent ? 62 : 0)}px;
  margin-right: ${(p) => (p.$hang ? -23 : -16)}px;
  padding-right: 16px;
  background: #c7c7c7;
  white-space: nowrap;
`;

const Spelling = styled.span`
  text-decoration: underline wavy #d0202a 1px;
  text-decoration-skip-ink: none;
  text-underline-offset: 3px;
`;

const Grammar = styled.span`
  text-decoration: underline double #1f4fb5 1px;
  text-decoration-skip-ink: none;
  text-underline-offset: 2px;
`;

const MarkSvg = styled.svg`
  display: inline-block;
  vertical-align: 1px;
`;

const ArticleFrame = styled(Frame)`
  top: 11px;
  left: -47px;
  right: -31px;
  bottom: -40px;
`;

const ArticleStep = styled(Step)`
  top: 183px;
  left: -119px;
  font-family: "Noto Sans", sans-serif;
`;

const Watermark = styled.div`
  position: absolute;
  z-index: 5;
  right: 15px;
  bottom: 4px;
  font-size: 19px;
  line-height: 28px;
  color: #c9c9c9;
  text-shadow: 1px 1px 1px #777;
`;
